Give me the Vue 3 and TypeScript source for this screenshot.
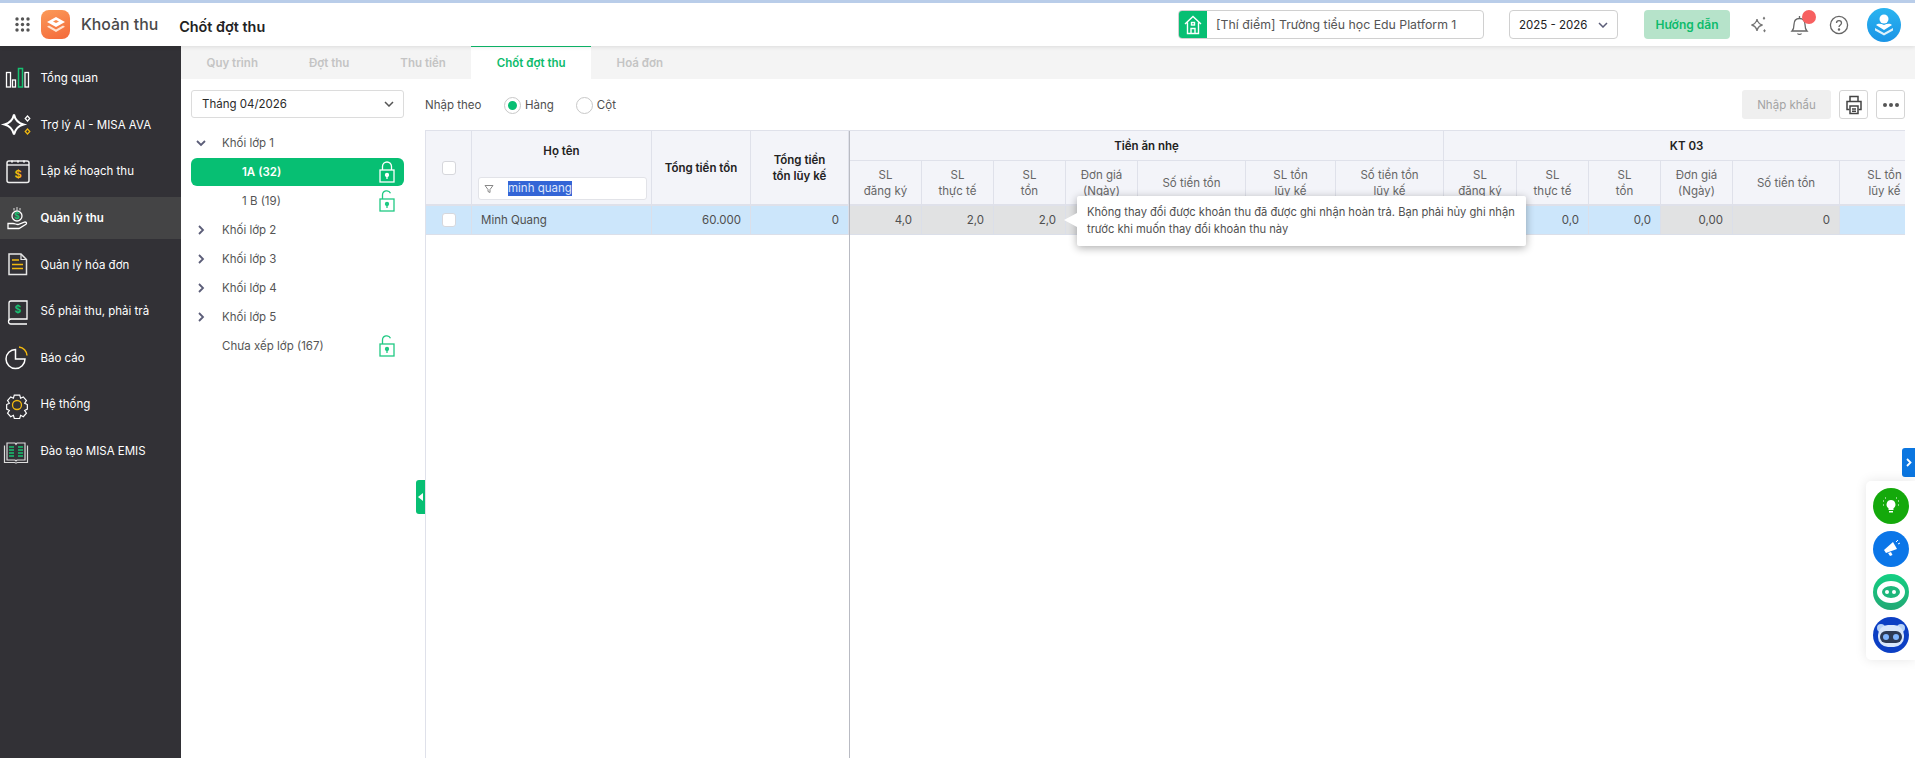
<template>
  <div class="app">
    <header class="topbar">
      <svg class="apps" width="15" height="15" viewBox="0 0 15 15">
        <g fill="#555">
          <template v-for="y in [2, 7.5, 13]" :key="y">
            <circle v-for="x in [2, 7.5, 13]" :key="x" :cx="x" :cy="y" r="1.7" />
          </template>
        </g>
      </svg>
      <div class="logo">
        <svg width="20" height="16" viewBox="0 0 20 16">
          <path d="M10 0l9 5-9 5-9-5z" fill="#fff" />
          <path d="M3 8.6L10 12.5l7-3.9 2 1.2-9 5.2-9-5.2z" fill="#ffe3d0" />
          <path d="M7 4.5l3-1.5 3 1.5-3 1.6z" fill="#f98a4b" />
        </svg>
      </div>
      <span class="app-name">Khoản thu</span>
      <span class="page-name">Chốt đợt thu</span>
      <div class="spacer"></div>
      <div class="school">
        <span class="school-icon">
          <svg width="18" height="20" viewBox="0 0 18 20" fill="none" stroke="#fff" stroke-width="1.4">
            <path d="M1 9L9 1.500 17 9M3.500 7.500V18.500h11V7.500" />
            <path d="M7 18.500V13.500h4v5" />
            <rect x="7.500" y="7.500" width="3" height="2.500" />
          </svg>
        </span>
        <span class="school-name">[Thí điểm] Trường tiểu học Edu Platform 1</span>
      </div>
      <div class="year">
        <span>2025 - 2026</span>
        <svg width="10" height="6" viewBox="0 0 10 6" fill="none" stroke="#5b5d78" stroke-width="1.5"><path d="M1 1l4 4 4-4" /></svg>
      </div>
      <button class="guide">Hướng dẫn</button>
      <svg class="top-ai" width="22" height="22" viewBox="0 0 22 22" fill="#777">
        <path d="M9 5c.6 3.6 2 5.2 5.5 6-3.500.8-4.900 2.400-5.500 6-.6-3.600-2-5.200-5.500-6C7 10.200 8.400 8.600 9 5z" fill="none" stroke="#777" stroke-width="1.3" />
        <path d="M16 2.500l1.300 1.800L16 6l-1.300-1.700zM16.500 15l1.300 1.800-1.300 1.700-1.300-1.700z" />
      </svg>
      <div class="bell">
        <svg width="20" height="24" viewBox="0 0 20 24" fill="none" stroke="#666" stroke-width="1.3">
          <path d="M2 18h15c-1.500-1.500-2-3-2-6.500 0-3.500-2-6-5.500-6S4 8 4 11.500c0 3.500-.5 5-2 6.500z" />
          <path d="M7.500 20.500c.8 1.200 3.200 1.200 4 0M9.500 3v2.500" />
        </svg>
        <span class="dot"></span>
      </div>
      <svg class="help" width="20" height="20" viewBox="0 0 20 20" fill="none" stroke="#666" stroke-width="1.3">
        <circle cx="10" cy="10" r="8.600" />
        <path d="M7.500 8c0-3.200 5-3.200 5 0 0 1.900-2.500 1.900-2.500 4" />
        <circle cx="10" cy="14.500" r=".6" fill="#666" />
      </svg>
      <div class="avatar">
        <svg width="22" height="24" viewBox="0 0 22 24" fill="#fff">
          <circle cx="11" cy="6" r="4.500" />
          <path d="M3 12c2-2 5-1.500 8 0 3-1.500 6-2 8 0l-8 5z" />
          <path d="M2 15l9 5 9-5v2.500l-9 5-9-5z" opacity=".85" />
        </svg>
      </div>
    </header>

    <div class="body">
      <nav class="sidebar">
        <a v-for="item in menu" :key="item.label" class="menu-item" :class="{ active: item.active }">
          <span class="menu-icon">
            <svg width="34" height="30" viewBox="0 0 34 30" fill="none" v-html="item.icon"></svg>
          </span>
          <span class="menu-label">{{ item.label }}</span>
        </a>
      </nav>

      <main class="main">
        <div class="tabs">
          <span v-for="t in tabs" :key="t" class="tab" :class="{ current: t === 'Chốt đợt thu' }">{{ t }}</span>
        </div>

        <div class="content">
          <aside class="tree-pane">
            <div class="month">
              <span>Tháng 04/2026</span>
              <svg width="10" height="6" viewBox="0 0 10 6" fill="none" stroke="#555" stroke-width="1.5"><path d="M1 1l4 4 4-4" /></svg>
            </div>
            <ul class="tree">
              <li
                v-for="node in tree"
                :key="node.label"
                class="tree-row"
                :class="{ selected: node.selected, child: node.child }"
              >
                <span class="arrow">
                  <svg v-if="node.arrow === 'down'" width="10" height="7" viewBox="0 0 10 7" fill="none" stroke="#5b5d78" stroke-width="1.8"><path d="M1 1l4 4 4-4" /></svg>
                  <svg v-else-if="node.arrow === 'right'" width="7" height="10" viewBox="0 0 7 10" fill="none" stroke="#5b5d78" stroke-width="1.8"><path d="M1 1l4 4-4 4" /></svg>
                </span>
                <span class="tree-label">{{ node.label }}</span>
                <svg v-if="node.lock" class="lock" width="16" height="22" viewBox="0 0 16 22" fill="none" :stroke="node.selected ? '#fff' : '#1fc983'" stroke-width="1.300">
                  <rect x="1" y="9" width="14" height="12" />
                  <path v-if="node.lock === 'closed'" d="M3.500 9V5.500a4.500 4.500 0 0 1 9 0V9" />
                  <path v-else d="M3.500 9V5a4.200 4.200 0 0 1 8-1.700" />
                  <circle cx="8" cy="14" r="1.500" :fill="node.selected ? '#fff' : '#1fc983'" />
                  <path d="M8 15v3" />
                </svg>
              </li>
            </ul>
            <span class="collapse">
              <svg width="5" height="8" viewBox="0 0 5 8"><path d="M5 0v8L0 4z" fill="#fff" /></svg>
            </span>
          </aside>

          <section class="grid-pane">
            <div class="toolbar">
              <span class="enter-by">Nhập theo</span>
              <span class="radio on"></span>
              <span class="radio-text">Hàng</span>
              <span class="radio"></span>
              <span class="radio-text">Cột</span>
              <div class="spacer"></div>
              <button class="import">Nhập khẩu</button>
              <button class="square">
                <svg width="18" height="20" viewBox="0 0 18 20" fill="none" stroke="#444" stroke-width="1.500">
                  <path d="M5 6V1.500h8V6M4.500 14.500H2V6.500h14v8h-2.500" />
                  <rect x="5" y="11" width="8" height="7.500" />
                  <path d="M7 14h4M7 16.200h4" />
                </svg>
              </button>
              <button class="square dots"><i></i><i></i><i></i></button>
            </div>

            <div class="grid">
              <div class="frozen">
                <table>
                  <colgroup>
                    <col style="width: 46px" />
                    <col style="width: 180px" />
                    <col style="width: 99px" />
                    <col style="width: 98px" />
                  </colgroup>
                  <thead>
                    <tr>
                      <th class="h2 check-cell"><span class="check"></span></th>
                      <th class="h2 name-head">
                        <div class="name-title">Họ tên</div>
                        <div class="filter">
                          <svg width="10" height="10" viewBox="0 0 10 10" fill="none" stroke="#888" stroke-width="1"><path d="M1 1.500h8L6 5.500v3L4 7.500v-2z" /></svg>
                          <span class="picked">minh quang</span>
                        </div>
                      </th>
                      <th class="h2">Tổng tiền tồn</th>
                      <th class="h2">Tổng tiền<br />tồn lũy kế</th>
                    </tr>
                  </thead>
                  <tbody>
                    <tr class="data">
                      <td class="check-cell"><span class="check"></span></td>
                      <td>Minh Quang</td>
                      <td class="num">60.000</td>
                      <td class="num">0</td>
                    </tr>
                  </tbody>
                </table>
              </div>
              <div class="scroll">
                <table>
                  <colgroup>
                    <col v-for="(w, i) in colWidths" :key="i" :style="{ width: w + 'px' }" />
                  </colgroup>
                  <thead>
                    <tr class="group">
                      <th colspan="7">Tiền ăn nhẹ</th>
                      <th colspan="6">KT 03</th>
                    </tr>
                    <tr class="sub">
                      <th v-for="(c, i) in subCols" :key="i" v-html="c"></th>
                    </tr>
                  </thead>
                  <tbody>
                    <tr class="data">
                      <td v-for="(c, i) in cells" :key="i" class="num" :class="{ grey: c.grey }">{{ c.v }}</td>
                    </tr>
                  </tbody>
                </table>
              </div>
            </div>
          </section>
        </div>
      </main>
    </div>

    <div class="tooltip">
      <span class="tip-arrow"></span>
      Không thay đổi được khoản thu đã được ghi nhận hoàn trả. Bạn phải hủy ghi nhận trước khi muốn thay đổi khoản thu này
    </div>

    <span class="side-tab">
      <svg width="6" height="9" viewBox="0 0 6 9" fill="none" stroke="#fff" stroke-width="1.800"><path d="M1 1l3.500 3.500L1 8" /></svg>
    </span>
    <div class="side-panel">
      <span class="bubble b-green">
        <svg width="22" height="22" viewBox="0 0 22 22" fill="#fff">
          <path d="M11 5a4.500 4.500 0 0 0-2.500 8.200V15h5v-1.800A4.500 4.500 0 0 0 11 5z" />
          <rect x="9" y="16" width="4" height="1.500" />
          <path d="M3 6h1M3 10h1M18 6h1M18 10h1M5 3h1M16 3h1" stroke="#fff" stroke-width="1" stroke-dasharray="1 1" />
        </svg>
      </span>
      <span class="bubble b-blue">
        <svg width="22" height="22" viewBox="0 0 22 22" fill="#fff">
          <path d="M13 4l4 7-11 4-2-3z" />
          <path d="M8 15l3-1 1.500 3-2.500 1z" />
          <path d="M16 4l2-2M18 6l2-1" stroke="#fff" stroke-width="1" />
        </svg>
      </span>
      <span class="bubble b-mint">
        <span class="mint-face"><i></i><i></i></span>
      </span>
      <span class="bubble b-robot">
        <svg width="32" height="28" viewBox="0 0 32 28">
          <circle cx="6" cy="7" r="4" fill="#b7d2f7" />
          <circle cx="26" cy="7" r="4" fill="#b7d2f7" />
          <rect x="3" y="4" width="26" height="22" rx="10" fill="#d8e6fb" />
          <rect x="5" y="10" width="22" height="12" rx="6" fill="#2d3a55" />
          <circle cx="11" cy="16" r="3" fill="#7fb4ff" />
          <circle cx="21" cy="16" r="3" fill="#7fb4ff" />
        </svg>
      </span>
    </div>
  </div>
</template>

<script setup lang="ts">
interface TreeNode {
  label: string;
  arrow?: "down" | "right";
  child?: boolean;
  selected?: boolean;
  lock?: "closed" | "open";
}

const w = 'stroke="#fff" stroke-width="1.3"';
const y = 'stroke="#f2b90f" stroke-width="1.3"';

const menu = [
  {
    label: "Tổng quan",
    icon: `<g ${w}><rect x="6.500" y="8.500" width="4" height="14.500"/><rect x="12.500" y="16" width="3" height="7"/><rect x="25" y="8.500" width="3.500" height="14.500"/></g><rect x="18.500" y="4.500" width="4" height="18.500" stroke="#17c172" stroke-width="1.500"/>`,
  },
  {
    label: "Trợ lý AI - MISA AVA",
    icon: `<path d="M14 4.500c1.200 5.500 3.500 8.300 9.500 10-6 1.700-8.300 4.500-9.500 10-1.200-5.500-3.500-8.300-9.500-10 6-1.700 8.300-4.500 9.500-10z" stroke="#fff" stroke-width="2"/><path d="M27.500 6l2.300 2.500-2.300 2.500-2.300-2.500z" stroke="#fff" stroke-width="1.200"/><path d="M27.500 19l2.300 2.500-2.300 2.500-2.300-2.500z" stroke="#f2b90f" stroke-width="1.200"/>`,
  },
  {
    label: "Lập kế hoạch thu",
    icon: `<rect x="7" y="4" width="22" height="21.500" rx="2" stroke="#eee" stroke-width="1.500"/><path d="M7 8h22" ${w}/><path d="M12 3.500v2M18 3.500v2M24 3.500v2" stroke="#eee" stroke-width="2"/><text x="18" y="20.500" font-size="11" font-weight="700" text-anchor="middle" fill="#f2b90f" font-family="Inter">$</text>`,
  },
  {
    label: "Quản lý thu",
    active: true,
    icon: `<circle cx="17" cy="13" r="5" ${w}/><text x="17" y="16.200" font-size="8.500" font-weight="700" text-anchor="middle" fill="#17c172" font-family="Inter">$</text><path d="M17 4v3.500M14 5v2.500M20 5v2.500" stroke="#ddd" stroke-width="1"/><path d="M8 20.500h5c2 0 3 1 5 1l7-2.500c1.500 0 2 1.500 1 2.200l-7 4.300H8z" ${w}/>`,
  },
  {
    label: "Quản lý hóa đơn",
    icon: `<path d="M9 4h12l5.500 5.500V24.500H9z" stroke="#e6e6e6" stroke-width="1.500"/><path d="M21 4v5.500h5.500" stroke="#e6e6e6" stroke-width="1.200"/><path d="M12 10h7M12 14.500h11M12 18.500h11" stroke="#f2b90f" stroke-width="1.400"/>`,
  },
  {
    label: "Sổ phải thu, phải trả",
    icon: `<path d="M9 24V6a2 2 0 0 1 2-2h16v18H11a2 2 0 0 0 0 5h16" ${w}/><text x="18" y="16" font-size="10" font-weight="700" text-anchor="middle" fill="#17c172" font-family="Inter">$</text>`,
  },
  {
    label: "Báo cáo",
    icon: `<path d="M15.500 6.500a9.500 9.500 0 1 0 9.500 9.500h-9.500z" stroke="#fff" stroke-width="1.500"/><path d="M19 4a9 9 0 0 1 8 8.500" stroke="#f2b90f" stroke-width="1.500"/>`,
  },
  {
    label: "Hệ thống",
    icon: `<path d="M14 4h6l1 3.500 3-1.500 3.500 4-2 3 3 1.500v5l-3 1.500 2 3-3.500 4-3-1.500-1 3.500h-6l-1-3.500-3 1.500-3.500-4 2-3-3-1.500v-5l3-1.500-2-3 3.500-4 3 1.500z" ${w} transform="translate(1.700 1.500) scale(.9)"/><circle cx="17" cy="15" r="4.500" ${y}/>`,
  },
  {
    label: "Đào tạo MISA EMIS",
    icon: `<path d="M4.500 8.500v17h10c1 0 1.500.5 1.500 1 0-.5.5-1 1.500-1h10v-17M7 6h8l1 1.500L17 6h8v17H17l-1 1-1-1H7z" stroke="#ddd" stroke-width="1.200"/><path d="M9 10h5M9 13h5M9 16h5M9 19h5M18 10h5M18 13h5M18 16h5M18 19h5" stroke="#17c172" stroke-width="1.500"/>`,
  },
];

const tabs = ["Quy trình", "Đợt thu", "Thu tiền", "Chốt đợt thu", "Hoá đơn"];

const tree: TreeNode[] = [
  { label: "Khối lớp 1", arrow: "down" },
  { label: "1A (32)", child: true, selected: true, lock: "closed" },
  { label: "1 B (19)", child: true, lock: "open" },
  { label: "Khối lớp 2", arrow: "right" },
  { label: "Khối lớp 3", arrow: "right" },
  { label: "Khối lớp 4", arrow: "right" },
  { label: "Khối lớp 5", arrow: "right" },
  { label: "Chưa xếp lớp (167)", lock: "open" },
];

const colWidths = [72, 72, 72, 72, 108, 90, 108, 73, 72, 72, 72, 107, 90];

const subCols = [
  "SL<br>đăng ký",
  "SL<br>thực tế",
  "SL<br>tồn",
  "Đơn giá<br>(Ngày)",
  "Số tiền tồn",
  "SL tồn<br>lũy kế",
  "Số tiền tồn<br>lũy kế",
  "SL<br>đăng ký",
  "SL<br>thực tế",
  "SL<br>tồn",
  "Đơn giá<br>(Ngày)",
  "Số tiền tồn",
  "SL tồn<br>lũy kế",
];

const cells = [
  { v: "4,0", grey: true },
  { v: "2,0", grey: true },
  { v: "2,0", grey: true },
  { v: "", grey: true },
  { v: "", grey: true },
  { v: "", grey: true },
  { v: "", grey: true },
  { v: "" },
  { v: "0,0" },
  { v: "0,0" },
  { v: "0,00", grey: true },
  { v: "0", grey: true },
  { v: "" },
];
</script>

<style>
html,
body {
  margin: 0;
  height: 100%;
  overflow: hidden;
}
</style>

<style scoped>
.app {
  position: relative;
  display: flex;
  flex-direction: column;
  height: 100vh;
  overflow: hidden;
  font-family: Inter, "Noto Sans", sans-serif;
  font-size: 11.5px;
  color: #4f4f4f;
  background: #fff;
  border-top: 3px solid #b9cde9;
  box-sizing: border-box;
}
.spacer {
  flex: 1;
}
.topbar {
  position: relative;
  z-index: 2;
  display: flex;
  align-items: center;
  flex: none;
  height: 43px;
  padding-left: 15px;
  background: #fff;
  box-shadow: 0 1px 4px rgba(0, 0, 0, 0.1);
}
.logo {
  display: flex;
  align-items: center;
  justify-content: center;
  width: 29px;
  height: 29px;
  margin-left: 11px;
  border-radius: 8px;
  background: linear-gradient(160deg, #fb9a58, #f4693a);
}
.app-name {
  margin-left: 11px;
  font-size: 15.800px;
  font-weight: 500;
  color: #4a4a4a;
}
.page-name {
  margin-left: 21px;
  margin-top: 3px;
  font-size: 14.400px;
  font-weight: 600;
  color: #222;
}
.school {
  display: flex;
  align-items: center;
  width: 306px;
  height: 29px;
  box-sizing: border-box;
  border: 1px solid #d0d0d0;
  border-radius: 4px;
  overflow: hidden;
}
.school-icon {
  display: flex;
  align-items: center;
  justify-content: center;
  flex: none;
  width: 28px;
  height: 100%;
  background: #07bf73;
}
.school-name {
  margin-left: 9px;
  color: #555;
  font-size: 12.300px;
  white-space: nowrap;
}
.year {
  display: flex;
  align-items: center;
  justify-content: space-between;
  width: 109px;
  height: 29px;
  box-sizing: border-box;
  margin-left: 25px;
  padding: 0 9px;
  border: 1px solid #d0d0d0;
  border-radius: 4px;
  color: #222;
}
.guide {
  width: 86px;
  height: 29px;
  margin-left: 26px;
  border: 0;
  border-radius: 4px;
  background: #b6e3ca;
  color: #0dbb6c;
  font: 600 12px Inter, sans-serif;
}
.top-ai {
  margin-left: 18px;
}
.bell {
  position: relative;
  display: flex;
  margin-left: 20px;
}
.dot {
  position: absolute;
  top: -3px;
  left: 12px;
  width: 14px;
  height: 14px;
  border-radius: 50%;
  background: #f76060;
}
.help {
  margin-left: 19px;
}
.avatar {
  display: flex;
  align-items: center;
  justify-content: center;
  width: 34px;
  height: 34px;
  margin: 0 14px 0 18px;
  border-radius: 50%;
  background: linear-gradient(180deg, #2bb4f0, #1a94e6);
}
.body {
  display: flex;
  flex: 1;
  min-height: 0;
}
.sidebar {
  display: flex;
  flex-direction: column;
  gap: 4.65px;
  flex: none;
  width: 181px;
  padding-top: 11px;
  box-sizing: border-box;
  background: #323136;
}
.menu-item {
  display: flex;
  align-items: center;
  height: 42px;
  color: #fff;
}
.menu-item.active {
  background: #444445;
  font-weight: 600;
}
.menu-icon {
  display: flex;
  flex: none;
  width: 40px;
  margin-top: 1px;
}
.menu-label {
  margin-left: 0.5px;
  white-space: nowrap;
}
.main {
  display: flex;
  flex-direction: column;
  flex: 1;
  min-width: 0;
}
.tabs {
  display: flex;
  flex: none;
  height: 33px;
  background: #f4f4f4;
}
.tab {
  display: flex;
  align-items: center;
  padding: 0 25.500px;
  color: #c4c4c4;
  font-weight: 600;
  white-space: nowrap;
}
.tab.current {
  background: #fff;
  color: #0dbb6c;
  box-shadow: inset 0 1px 0 #0dbb6c;
}
.content {
  display: flex;
  flex: 1;
  min-height: 0;
}
.tree-pane {
  position: relative;
  flex: none;
  width: 244px;
  padding: 11px 21px 0 10px;
  box-sizing: border-box;
}
.month {
  display: flex;
  align-items: center;
  justify-content: space-between;
  height: 28px;
  padding: 0 9px 0 10px;
  border: 1px solid #dcdcdc;
  border-radius: 3px;
  box-sizing: border-box;
  color: #2a2a2a;
}
.tree {
  display: flex;
  flex-direction: column;
  gap: 1px;
  margin: 11px 0 0;
  padding: 0;
  list-style: none;
}
.tree-row {
  position: relative;
  display: flex;
  align-items: center;
  height: 28px;
  border-radius: 6px;
  color: #555;
}
.arrow {
  display: flex;
  justify-content: center;
  flex: none;
  width: 20px;
  margin: 0 11px 0 0;
}
.child .tree-label {
  margin-left: 20px;
}
.selected {
  background: #07bf73;
  color: #fff;
  font-weight: 600;
}
.lock {
  position: absolute;
  right: 9px;
  top: 3px;
}
.collapse {
  position: absolute;
  top: 401px;
  right: 0;
  display: flex;
  align-items: center;
  justify-content: center;
  width: 9px;
  height: 34px;
  border-radius: 3px 0 0 3px;
  background: #07bf73;
}
.grid-pane {
  display: flex;
  flex-direction: column;
  flex: 1;
  min-width: 0;
  padding: 11px 10px 0 0;
}
.toolbar {
  display: flex;
  align-items: center;
  flex: none;
  height: 29px;
  margin-bottom: 11px;
}
.enter-by {
  width: 79px;
}
.radio {
  width: 17px;
  height: 17px;
  margin-top: 2px;
  border: 1px solid #c8c8c8;
  border-radius: 50%;
  box-sizing: border-box;
}
.radio.on {
  border: 4.500px solid #fff;
  outline: 1px solid #c8c8c8;
  outline-offset: -1px;
  background: #07bf73;
}
.radio-text {
  margin-left: 4px;
  margin-right: 22px;
}
.import {
  width: 89px;
  height: 29px;
  border: 0;
  border-radius: 3px;
  background: #efefef;
  color: #a3a3a3;
  font: 11.500px Inter, sans-serif;
}
.square {
  display: flex;
  align-items: center;
  justify-content: center;
  gap: 2px;
  width: 29px;
  height: 29px;
  margin-left: 8px;
  padding: 0;
  background: #fff;
  border: 1px solid #d5d5d5;
  border-radius: 3px;
}
.dots i {
  width: 4px;
  height: 4px;
  border-radius: 50%;
  background: #555;
}
.grid {
  display: flex;
  flex: 1;
  min-height: 0;
  border-left: 1px solid #dfe1ea;
  border-top: 1px solid #dfe1ea;
  box-sizing: border-box;
}
.frozen {
  flex: none;
  width: 423px;
  border-right: 1px solid #b9bbc3;
}
.scroll {
  flex: 1;
  min-width: 0;
  overflow: hidden;
}
table {
  table-layout: fixed;
  width: 100%;
  border-collapse: separate;
  border-spacing: 0;
}
.scroll table {
  width: 1080px;
}
th {
  padding: 0;
  background: #f3f4f9;
  border-right: 1px solid #dfe1ea;
  border-bottom: 1px solid #dfe1ea;
  color: #222;
  font-weight: 600;
  line-height: 16px;
  text-align: center;
  box-sizing: border-box;
}
thead th.h2 {
  height: 75px;
  border-bottom-width: 2px;
}
.name-head {
  vertical-align: top;
}
.name-title {
  margin-top: 12px;
}
.filter {
  display: flex;
  align-items: center;
  height: 23px;
  margin: 18px 4px 0 6px;
  padding-left: 5px;
  background: #fff;
  border: 1px solid #e2e3e8;
  border-radius: 3px;
  box-sizing: border-box;
}
.picked {
  margin-left: 14px;
  padding: 0;
  background: #3465d6;
  color: #dfe7fb;
  font-weight: 400;
  line-height: 15px;
}
.check {
  display: inline-block;
  width: 14px;
  height: 14px;
  background: #fff;
  border: 1px solid #d6d7dc;
  border-radius: 3px;
  box-sizing: border-box;
  vertical-align: middle;
}
td {
  height: 29px;
  padding: 0 9px;
  background: #cce6fb;
  border-right: 1px solid #dbdfe9;
  border-bottom: 1px solid #dbdfe9;
  color: #4f4f4f;
  box-sizing: border-box;
  white-space: nowrap;
}
.num {
  text-align: right;
}
.grey {
  background: #e1e2e3;
}
.check-cell {
  text-align: center;
  padding: 0;
}
.group th {
  height: 30px;
}
.sub th {
  height: 45px;
  color: #666;
  font-weight: 400;
  border-bottom-width: 2px;
}
.tooltip {
  position: absolute;
  left: 1077px;
  top: 193px;
  z-index: 3;
  width: 449px;
  height: 50px;
  box-sizing: border-box;
  padding: 8px 10px;
  background: #fff;
  border-radius: 2px;
  box-shadow: 0 2px 8px rgba(0, 0, 0, 0.32);
  color: #4f4f4f;
  font-size: 11.150px;
  line-height: 17px;
}
.tip-arrow {
  position: absolute;
  left: -13px;
  top: 17px;
  border-style: solid;
  border-width: 7px 13px 7px 0;
  border-color: transparent #fff transparent transparent;
}
.side-tab {
  position: absolute;
  right: 0;
  top: 445px;
  display: flex;
  align-items: center;
  justify-content: center;
  width: 13px;
  height: 29px;
  border-radius: 3px 0 0 3px;
  background: #0b76e0;
}
.side-panel {
  position: absolute;
  right: 0;
  top: 478px;
  display: flex;
  flex-direction: column;
  align-items: center;
  gap: 7px;
  width: 49px;
  height: 179px;
  padding-top: 7px;
  box-sizing: border-box;
  background: #fff;
  border-radius: 5px 0 0 5px;
  box-shadow: 0 0 12px rgba(0, 0, 0, 0.1);
}
.bubble {
  display: flex;
  align-items: center;
  justify-content: center;
  flex: none;
  width: 36px;
  height: 36px;
  border-radius: 50%;
}
.b-green {
  background: #14a90b;
}
.b-blue {
  background: #0b76e8;
}
.b-mint {
  background: linear-gradient(180deg, #14d083, #22a874);
}
.mint-face {
  display: flex;
  align-items: center;
  justify-content: center;
  gap: 3px;
  width: 28px;
  height: 22px;
  border-radius: 50%;
  border: 5px solid #fff;
  box-sizing: border-box;
  background: #1db67a;
}
.mint-face i {
  width: 4px;
  height: 4px;
  border-radius: 50%;
  background: #fff;
}
.b-robot {
  background: #0c3fc4;
}
</style>
